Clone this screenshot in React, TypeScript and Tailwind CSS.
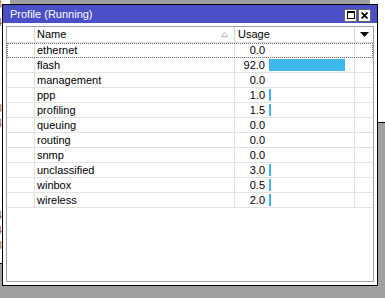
import React from 'react';

type Row = { name: string; usage: number };

const rows: Row[] = [
  { name: 'ethernet', usage: 0 },
  { name: 'flash', usage: 92 },
  { name: 'management', usage: 0 },
  { name: 'ppp', usage: 1 },
  { name: 'profiling', usage: 1.5 },
  { name: 'queuing', usage: 0 },
  { name: 'routing', usage: 0 },
  { name: 'snmp', usage: 0 },
  { name: 'unclassified', usage: 3 },
  { name: 'winbox', usage: 0.5 },
  { name: 'wireless', usage: 2 },
];

// bits of text from the window behind, cut off by the left edge
const behind = [
  { top: -3, ch: '3' },
  { top: 15, ch: '4' },
  { top: 101, ch: '3' },
  { top: 116, ch: '4' },
  { top: 208, ch: '4' },
  { top: 223, ch: '4' },
  { top: 238, ch: '3' },
];

export default function App() {
  return (
    <div className="relative w-[385px] h-[298px] overflow-hidden bg-[#a0a0a0] font-['Liberation_Sans',Arial,sans-serif] text-[11px] text-black">
      {/* windows behind */}
      <div className="absolute left-0 top-0 w-[10px] h-[264px] bg-white border-b border-black overflow-hidden">
        {behind.map((b, i) => (
          <span key={i} className="absolute left-[-4px] leading-[14px] text-[#b06010]" style={{ top: b.top }}>
            {b.ch}
          </span>
        ))}
      </div>
      <div className="absolute left-[370px] top-0 w-[20px] h-[123px] bg-white border-b border-black" />

      {/* Profile window */}
      <div className="absolute left-[2px] top-[4px] w-[376px] h-[282px] border border-black bg-white flex flex-col">
        <div className="h-[18px] bg-[#4b4fc8] flex items-center pl-[7px] pr-[6px]">
          <span className="text-white text-[11px] leading-none">Profile (Running)</span>
          <div className="ml-auto flex gap-[1px] pt-[2px]">
            <div className="w-[13px] h-[13px] bg-white border border-[#6a6a6a] flex items-center justify-center">
              <div className="w-[8px] h-[8px] border border-black border-t-2" />
            </div>
            <div className="w-[13px] h-[13px] bg-white border border-[#6a6a6a] flex items-center justify-center">
              <svg width="7" height="7" viewBox="0 0 7 7">
                <path d="M0.5 0.5 L6.5 6.5 M6.5 0.5 L0.5 6.5" stroke="#000" strokeWidth="1.6" />
              </svg>
            </div>
          </div>
        </div>

        <div className="flex-1 p-[3px]">
          <div className="h-full border border-[#a0a0a0] bg-white">
            {/* header */}
            <div className="flex h-[16px] border-b border-[#d8d8d8] leading-[15px]">
              <div className="w-[28px] border-r border-[#d8d8d8]" />
              <div className="w-[200px] border-r border-[#d8d8d8] flex items-center pl-[2px] pr-[6px]">
                <span>Name</span>
                <svg className="ml-auto" width="7" height="5" viewBox="0 0 7 5">
                  <path d="M0.5 4.5 L3.5 0.5 L6.5 4.5 Z" fill="none" stroke="#b8b8b8" strokeWidth="1" />
                </svg>
              </div>
              <div className="w-[120px] border-r border-[#d8d8d8] pl-[3px]">Usage</div>
              <div className="flex-1 flex items-center justify-center">
                <svg width="9" height="5" viewBox="0 0 9 5">
                  <path d="M0 0 L9 0 L4.5 5 Z" fill="#000" />
                </svg>
              </div>
            </div>

            {/* rows */}
            {rows.map((r, i) => (
              <div
                key={r.name}
                className={`flex h-[15px] border-b border-[#e2e2e2] leading-[14px] ${
                  i === 0 ? 'outline-1 outline-dotted outline-[#7a7a7a] -outline-offset-1' : ''
                }`}
              >
                <div className="w-[28px] border-r border-[#e2e2e2]" />
                <div className="w-[200px] border-r border-[#e2e2e2] pl-[2px]">{r.name}</div>
                <div className="w-[120px] border-r border-[#e2e2e2] flex items-center">
                  <div className="w-[30px] text-right">{r.usage.toFixed(1)}</div>
                  {r.usage > 0 && (
                    <div
                      className="ml-[4px] h-[12px] bg-[#3eb8ec]"
                      style={{ width: Math.max(2, Math.round((r.usage * 76) / 92)) }}
                    />
                  )}
                </div>
                <div className="flex-1" />
              </div>
            ))}
          </div>
        </div>
      </div>
    </div>
  );
}
